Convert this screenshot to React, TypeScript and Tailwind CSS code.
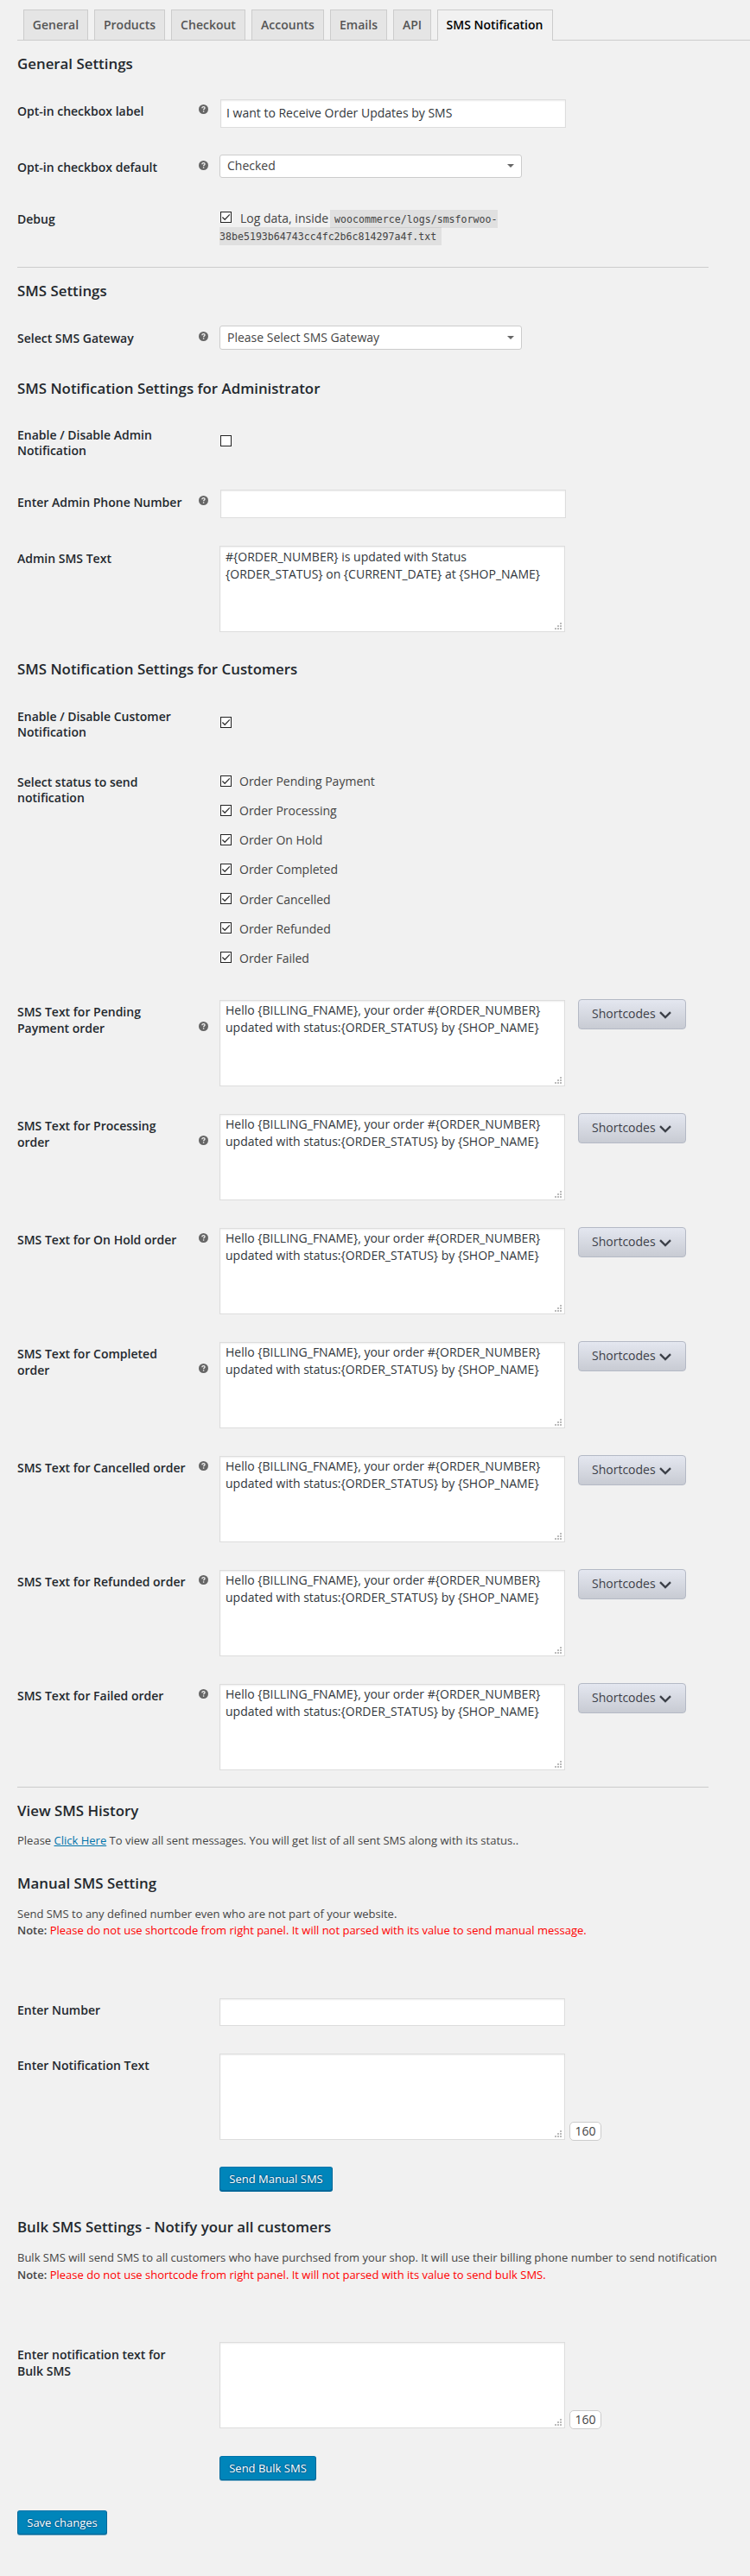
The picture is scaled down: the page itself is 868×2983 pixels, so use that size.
import React from "react";
import type { ReactNode } from "react";

const tabs = [
  { name: "General", width: "w-[75px]" },
  { name: "Products", width: "w-[82px]" },
  { name: "Checkout", width: "w-[86px]" },
  { name: "Accounts", width: "w-[84px]" },
  { name: "Emails", width: "w-[66px]" },
  { name: "API", width: "w-[44px]" },
];

const statuses = ["Pending Payment", "Processing", "On Hold", "Completed", "Cancelled", "Refunded", "Failed"];

const templates = [
  ["SMS Text for Pending", "Payment order"],
  ["SMS Text for Processing", "order"],
  ["SMS Text for On Hold order"],
  ["SMS Text for Completed", "order"],
  ["SMS Text for Cancelled order"],
  ["SMS Text for Refunded order"],
  ["SMS Text for Failed order"],
];

function HelpIcon() {
  return (
    <svg width="11" height="11" viewBox="0 0 11 11" className="block">
      <circle cx="5.5" cy="5.5" r="5.5" fill="#666" />
      <path d="M3.9 4.3C3.9 3.2 4.6 2.6 5.5 2.6s1.6.6 1.6 1.4c0 1-1.5 1.1-1.5 2.3" fill="none" stroke="#f1f1f1" strokeWidth="1.3" />
      <rect x="4.9" y="7.3" width="1.4" height="1.4" fill="#f1f1f1" />
    </svg>
  );
}

function Heading({ children, className }: { children: ReactNode; className: string }) {
  return <h2 className={`text-[16.85px] leading-6 font-semibold text-[#23282d] ${className}`}>{children}</h2>;
}

type RowProps = {
  lines: string[];
  className: string;
  labelClass: string;
  iconClass?: string;
  children: ReactNode;
};

function Row({ lines, className, labelClass, iconClass, children }: RowProps) {
  return (
    <div className={`flex items-start ${className}`}>
      <div className={`w-[210px] font-semibold whitespace-nowrap text-[#23282d] ${labelClass}`}>
        {lines.map((line) => (
          <div key={line}>{line}</div>
        ))}
      </div>
      <div className={`w-6 ${iconClass ?? ""}`}>{iconClass && <HelpIcon />}</div>
      {children}
    </div>
  );
}

function TextInput({ value, className }: { value?: string; className: string }) {
  return (
    <div
      className={`flex w-[400px] items-center border border-[#ddd] bg-white px-[6px] pb-px text-[#32373c] shadow-[inset_0_1px_2px_rgba(0,0,0,0.07)] ${className}`}
    >
      {value}
    </div>
  );
}

function Select({ value, className }: { value: string; className: string }) {
  return (
    <div className={`flex w-[350px] items-center justify-between rounded-[3px] border border-[#ccc] bg-white pr-2 pl-2 text-[#444] ${className}`}>
      <span>{value}</span>
      <svg width="8" height="4" viewBox="0 0 8 4">
        <path d="M0 0H8L4 4Z" fill="#666" />
      </svg>
    </div>
  );
}

function TextArea({ lines = [], className = "pt-px" }: { lines?: string[]; className?: string }) {
  return (
    <div
      className={`relative h-[100px] w-[400px] shrink-0 border border-[#ddd] bg-white px-[6px] leading-5 whitespace-nowrap text-[#32373c] shadow-[inset_0_1px_2px_rgba(0,0,0,0.07)] ${className}`}
    >
      {lines.map((line) => (
        <div key={line}>{line}</div>
      ))}
      <svg width="8" height="8" viewBox="0 0 8 8" className="absolute right-[3px] bottom-[2px]" fill="#bbb" shapeRendering="crispEdges">
        <path d="M6 0h2v2H6zM3 3h2v2H3zM6 3h2v2H6zM0 6h2v2H0zM3 6h2v2H3zM6 6h2v2H6z" />
      </svg>
    </div>
  );
}

function Checkbox({ checked = false }: { checked?: boolean }) {
  return (
    <svg width="13" height="13" viewBox="0 0 13 13" className="block shrink-0">
      <rect x="0.5" y="0.5" width="12" height="12" fill="#fff" stroke="#222" />
      {checked && <path d="M2.4 6.5L5.2 9.3L10.8 3.4" fill="none" stroke="#333" strokeWidth="1.3" />}
    </svg>
  );
}

function PrimaryButton({ children, className }: { children: ReactNode; className: string }) {
  return (
    <button
      className={`flex h-7 items-center justify-center rounded-[3px] border border-[#006799] border-t-[#0073aa] bg-[#0085ba] text-[13px] text-white [text-shadow:0_-1px_1px_#006799,1px_0_1px_#006799,0_1px_1px_#006799,-1px_0_1px_#006799] ${className}`}
    >
      {children}
    </button>
  );
}

function ShortcodesButton() {
  return (
    <button className="-mt-px ml-[15px] flex h-[35px] w-[125px] items-center rounded-[4px] border border-[#b4b9c5] bg-linear-to-b from-[#e4e7f0] to-[#c8cbd3] pl-[15px] text-[#3c4048]">
      <span className="pb-[2px]">Shortcodes</span>
      <svg width="14" height="9" viewBox="0 0 14 9" className="mt-px ml-1" fill="none">
        <path d="M1 1.2L7 7L13 1.2" stroke="#3c4048" strokeWidth="2.4" />
      </svg>
    </button>
  );
}

function Counter() {
  return (
    <div className="mt-[79px] ml-[5px] flex h-[22px] w-[37px] items-center justify-center rounded-[5px] border border-[#ccc] bg-white text-[#444]">
      160
    </div>
  );
}

export default function App() {
  return (
    <div className="h-[2983px] w-[868px] overflow-hidden bg-[#f1f1f1] pl-5 font-['Open_Sans',sans-serif] text-[14px] leading-[18px] text-[#444]">
      <nav className="flex h-[47px] items-end gap-[7px] border-b border-[#ccc] pl-[7px] font-semibold">
        {tabs.map((tab) => (
          <div
            key={tab.name}
            className={`flex h-[35px] items-center justify-center border border-b-0 border-[#ccc] bg-[#e5e5e5] text-[#555] ${tab.width}`}
          >
            {tab.name}
          </div>
        ))}
        <div className="-mb-px flex h-9 w-[134px] items-center justify-center border border-b-0 border-[#ccc] bg-[#f1f1f1] pr-px pb-px text-black">
          SMS Notification
        </div>
      </nav>

      <Heading className="h-[68px] pt-[15px]">General Settings</Heading>
      <Row lines={["Opt-in checkbox label"]} className="h-16" labelClass="pt-[5px]" iconClass="pt-[6px]">
        <TextInput value="I want to Receive Order Updates by SMS" className="ml-px h-[33px]" />
      </Row>
      <Row lines={["Opt-in checkbox default"]} className="h-16" labelClass="pt-[6px]" iconClass="pt-[7px]">
        <Select value="Checked" className="h-[27px] pb-px" />
      </Row>
      <Row lines={["Debug"]} className="h-[66px]" labelClass="pt-[2px]">
        <div className="h-[42px] w-[340px] leading-5 whitespace-nowrap">
          <div className="flex h-5 items-start">
            <div className="pt-[2px] pl-px">
              <Checkbox checked />
            </div>
            <span className="w-[114px] pl-[10px]">Log data, inside</span>
            <code className="h-[21px] bg-black/7 pr-px pl-[5px] font-['DejaVu_Sans_Mono',monospace] text-[11.6px] leading-[22px]">
              woocommerce/logs/smsforwoo-
            </code>
          </div>
          <code className="block h-[21px] w-[257px] bg-black/7 font-['DejaVu_Sans_Mono',monospace] text-[11.6px] leading-[22px]">
            38be5193b64743cc4fc2b6c814297a4f.txt
          </code>
        </div>
      </Row>
      <hr className="w-[800px] border-[#ccc]" />

      <Heading className="h-[67px] pt-[15px]">SMS Settings</Heading>
      <Row lines={["Select SMS Gateway"]} className="h-[61px]" labelClass="pt-[6px]" iconClass="pt-[7px]">
        <Select value="Please Select SMS Gateway" className="h-7" />
      </Row>

      <Heading className="h-[57px]">SMS Notification Settings for Administrator</Heading>
      <Row lines={["Enable / Disable Admin", "Notification"]} className="h-[72px]" labelClass="">
        <div className="pt-[9px] pl-px">
          <Checkbox />
        </div>
      </Row>
      <Row lines={["Enter Admin Phone Number"]} className="h-[65px]" labelClass="pt-[6px]" iconClass="pt-[7px]">
        <TextInput className="ml-px h-[33px]" />
      </Row>
      <Row lines={["Admin SMS Text"]} className="h-[131px]" labelClass="pt-[6px]">
        <TextArea
          className="pt-[2px]"
          lines={["#{ORDER_NUMBER} is updated with Status", "{ORDER_STATUS} on {CURRENT_DATE} at {SHOP_NAME}"]}
        />
      </Row>

      <Heading className="h-[58px]">SMS Notification Settings for Customers</Heading>
      <Row lines={["Enable / Disable Customer", "Notification"]} className="h-[76px]" labelClass="">
        <div className="pt-[9px] pl-px">
          <Checkbox checked />
        </div>
      </Row>
      <Row lines={["Select status to send", "notification"]} className="h-[261px]" labelClass="">
        <div className="flex flex-col gap-4 pl-px">
          {statuses.map((status, i) => (
            <div key={status} className="flex h-[18px] items-start gap-[9px]">
              <div className="pt-px">
                <Checkbox checked />
              </div>
              <span className={i < 4 ? "-mt-px" : ""}>Order {status}</span>
            </div>
          ))}
        </div>
      </Row>
      <div className="h-[911px]">
        {templates.map((lines) => (
          <Row
            key={lines[0]}
            lines={lines}
            className="h-[132px]"
            labelClass="pt-[4px] leading-[19px]"
            iconClass={lines.length > 1 ? "pt-[25px]" : "pt-[6px]"}
          >
            <TextArea
              lines={["Hello {BILLING_FNAME}, your order #{ORDER_NUMBER}", "updated with status:{ORDER_STATUS} by {SHOP_NAME}"]}
            />
            <ShortcodesButton />
          </Row>
        ))}
      </div>
      <hr className="w-[800px] border-[#ccc]" />

      <Heading className="h-[52px] pt-[15px]">View SMS History</Heading>
      <p className="h-[47px] text-[13px] leading-[19px]">
        Please <span className="text-[#0073aa] underline">Click Here</span> To view all sent messages. You will get list of all sent
        SMS along with its status..
      </p>

      <Heading className="h-[38px]">Manual SMS Setting</Heading>
      <div className="h-[107px] text-[13px] leading-[19px] whitespace-nowrap">
        <p>Send SMS to any defined number even who are not part of your website.</p>
        <p>
          <b className="font-semibold">Note:</b>{" "}
          <span className="text-[#f00]">
            Please do not use shortcode from right panel. It will not parsed with its value to send manual message.
          </span>
        </p>
      </div>
      <Row lines={["Enter Number"]} className="h-16" labelClass="pt-[5px]">
        <TextInput className="h-8" />
      </Row>
      <Row lines={["Enter Notification Text"]} className="h-[131px]" labelClass="pt-[5px]">
        <TextArea />
        <Counter />
      </Row>
      <div className="h-[58px] pl-[234px]">
        <PrimaryButton className="w-[131px] shadow-[0_1px_0_#006799]">Send Manual SMS</PrimaryButton>
      </div>

      <Heading className="h-[38px]">Bulk SMS Settings - Notify your all customers</Heading>
      <div className="h-[107px] text-[13px] leading-[19.5px] whitespace-nowrap">
        <p>
          Bulk SMS will send SMS to all customers who have purchsed from your shop. It will use their billing phone number to send
          notification
        </p>
        <p>
          <b className="font-semibold">Note:</b>{" "}
          <span className="text-[#f00]">
            Please do not use shortcode from right panel. It will not parsed with its value to send bulk SMS.
          </span>
        </p>
      </div>
      <Row lines={["Enter notification text for", "Bulk SMS"]} className="h-[132px]" labelClass="pt-[5px] leading-[19px]">
        <TextArea />
        <Counter />
      </Row>
      <div className="h-[63px] pl-[234px]">
        <PrimaryButton className="w-[112px] shadow-[0_1px_0_#66a4c2]">Send Bulk SMS</PrimaryButton>
      </div>
      <PrimaryButton className="w-[104px] shadow-[0_1px_0_#66a4c2]">Save changes</PrimaryButton>
    </div>
  );
}
